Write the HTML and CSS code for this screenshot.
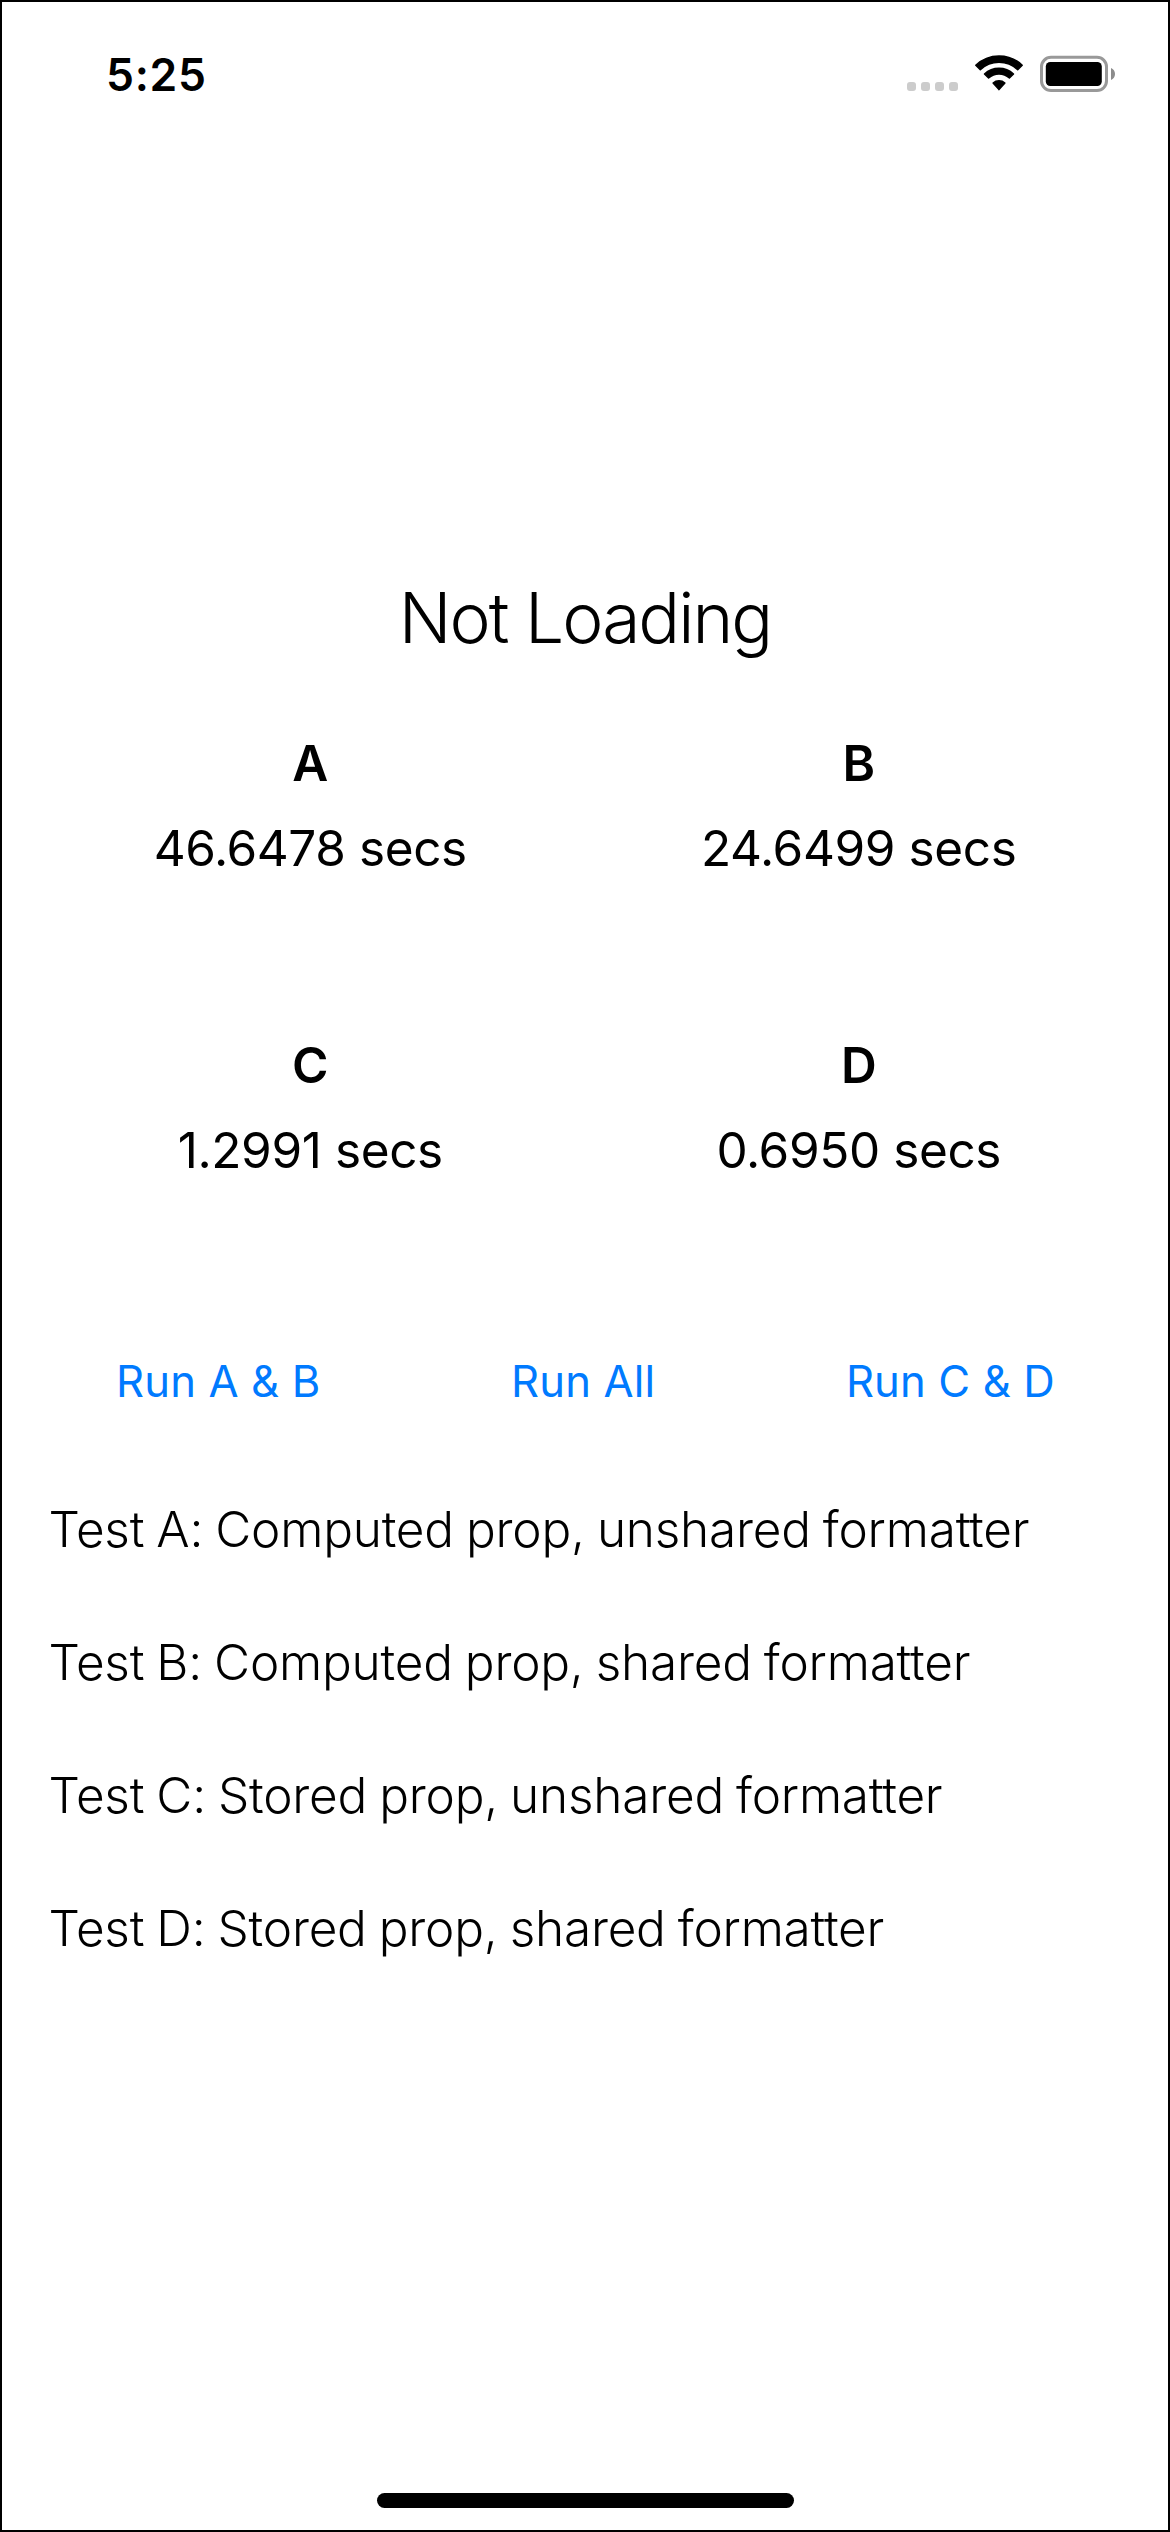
FILE: index.html
```html
<!DOCTYPE html>
<html lang="en">
<head>
<meta charset="utf-8">
<title>Formatter Tests</title>
<link rel="stylesheet" href="styles.css">
</head>
<body>
<div class="screen">
  <header class="status">
    <span class="time">5:25</span>
    <div class="indicators">
      <svg class="dots" width="51" height="9" viewBox="0 0 51 9"><g fill="#ccc"><rect width="9" height="9" rx="3"/><rect x="14" width="9" height="9" rx="3"/><rect x="28" width="9" height="9" rx="3"/><rect x="42" width="9" height="9" rx="3"/></g></svg>
      <svg class="wifi" width="48" height="37" viewBox="0 0 48 37"><g stroke="#000" stroke-width="1.5" stroke-linejoin="round"><path d="M.8 10.240A33.550 33.550 0 0 1 47.200 10.240L42.700 14.700A27.250 27.250 0 0 0 5.300 14.700Z"/><path d="M9.500 18.970A21.250 21.250 0 0 1 38.500 18.970L34.400 23.050A15.450 15.450 0 0 0 13.600 23.050Z"/><path d="M18.100 28A8.850 8.850 0 0 1 29.900 28L24 34.600Z"/></g></svg>
      <svg class="battery" width="75" height="38" viewBox="0 0 75 38"><rect x="1.500" y="2.300" width="65" height="33.200" rx="9.500" fill="none" stroke="#999" stroke-width="3"/><rect x="5.800" y="7" width="56" height="24" rx="4.500"/><path d="M71 13v12c2.400-1 4-3.300 4-6s-1.600-5-4-6z" fill="#8c8c8c"/></svg>
    </div>
  </header>
  <main class="content">
    <h1 class="title">Not Loading</h1>
    <section class="results">
      <div class="result"><h2 class="name">A</h2><p class="value">46.6478 secs</p></div>
      <div class="result"><h2 class="name">B</h2><p class="value">24.6499 secs</p></div>
      <div class="result"><h2 class="name">C</h2><p class="value">1.2991 secs</p></div>
      <div class="result"><h2 class="name">D</h2><p class="value">0.6950 secs</p></div>
    </section>
    <nav class="actions">
      <button class="run">Run A &amp; B</button><button class="run">Run All</button><button class="run">Run C &amp; D</button>
    </nav>
    <ul class="tests">
      <li class="test">Test A: Computed prop, unshared formatter</li>
      <li class="test">Test B: Computed prop, shared formatter</li>
      <li class="test">Test C: Stored prop, unshared formatter</li>
      <li class="test">Test D: Stored prop, shared formatter</li>
    </ul>
  </main>
  <div class="home"></div>
</div>
</body>
</html>
```
FILE: styles.css
```css
* { box-sizing: border-box; margin: 0; padding: 0; }
body { font-family: Inter, "Liberation Sans", sans-serif; color: #000; background: #fff; }
.screen { width: 1170px; height: 2532px; border: 2px solid #000; display: flex; flex-direction: column; align-items: center; overflow: hidden; }
.status { width: 100%; height: 144px; padding: 45px 53px 0 104px; display: flex; justify-content: space-between; align-items: flex-start; }
.time { font-size: 44.5px; line-height: 56px; font-weight: 600; letter-spacing: 0.7px; }
.indicators { display: flex; align-items: flex-start; padding-top: 8px; gap: 17px; }
.dots { margin-top: 27px; }
.content { width: 100%; padding: 430px 48px 0; flex: 1; }
.title { font-size: 69.5px; line-height: 84px; font-weight: 300; text-align: center; letter-spacing: -2px; }
.results { display: grid; grid-template-columns: 1fr 1fr; grid-auto-rows: 302px; margin: 61px -13px 0 -14px; }
.result { text-align: center; }
.name { font-size: 49.5px; line-height: 84px; font-weight: 600; }
.value { font-size: 49.5px; line-height: 86px; font-weight: 400; letter-spacing: -0.4px; }
.actions { display: flex; justify-content: space-between; padding: 30px 65px 0 66px; }
.run { border: 0; background: none; color: #007aff; font: 400 43.6px/54px Inter, sans-serif; letter-spacing: 0.15px; }
.tests { list-style: none; margin: 54px 0 0 -1.5px; }
.test { font-size: 49.5px; line-height: 133px; font-weight: 300; letter-spacing: -0.22px; word-spacing: -1.6px; white-space: nowrap; }
.home { width: 417px; height: 15px; border-radius: 8px; background: #000; margin: 0 0 22px 1px; }
```
